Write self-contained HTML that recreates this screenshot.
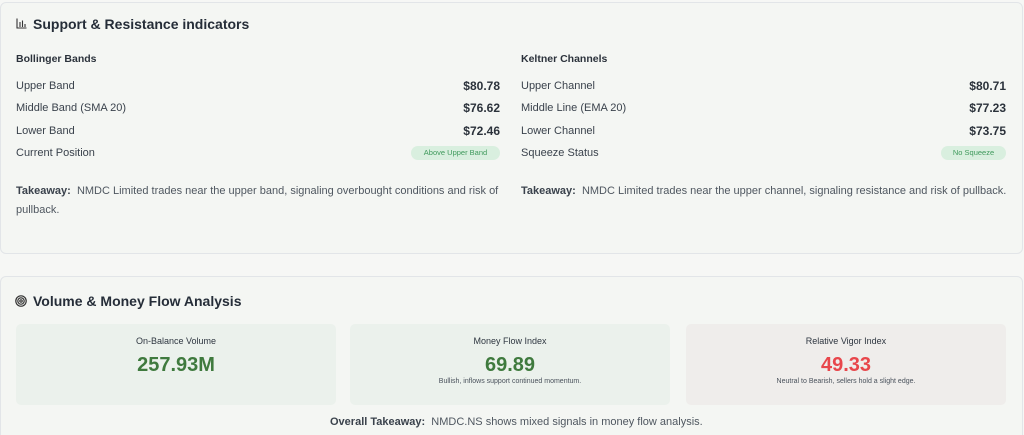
<!DOCTYPE html>
<html style="width:1024px;height:435px;overflow:hidden"><head><style>
*{box-sizing:border-box;margin:0;padding:0}
body{width:1024px;height:435px;overflow:hidden;background:#f6f7f5;font-family:"Liberation Sans",sans-serif;color:#333b44;position:relative}
.card{position:absolute;left:0;width:1023px;background:#f4f6f3;border:1px solid #e2e5e8;border-radius:6px}
.t{position:absolute;font-size:14px;font-weight:bold;color:#252d38;white-space:nowrap}
.a{position:absolute;white-space:nowrap}
.h{font-size:10.5px;font-weight:bold;color:#2b323b}
.l{font-size:11px;color:#3a424c}
.v{font-size:12px;font-weight:bold;color:#2b323b;text-align:right}
.b{position:absolute;height:14px;border-radius:7px;background:#d9efdf;color:#3f9a5c;font-size:7.5px;line-height:14px;padding:0 8px;text-align:center}
.tk{font-size:11px;color:#4f5760;line-height:19px}
.tk b{color:#3a424c}
.box{position:absolute;top:324px;height:81px;width:320px;border-radius:5px;background:#ebf1ec;text-align:center}
.box .n{font-size:9px;color:#2e3640;margin-top:12px}
.box .val{font-size:20px;font-weight:bold;color:#3f7a3e;margin-top:8px;line-height:22px}
.box .s{font-size:7px;color:#4a525c;margin-top:2px}
</style></head><body>
<div class="card" style="top:2px;height:252px"></div>
<div class="card" style="top:276px;height:165px"></div>
<svg style="position:absolute;left:16px;top:18px" width="11" height="11" viewBox="0 0 11 11" fill="none" stroke="#333" stroke-width="1.1"><path d="M1 0.5V10H10.5M4 9V4M6.5 9V2.5M9 9V6"/></svg>
<div class="t" style="left:33px;top:16px">Support &amp; Resistance indicators</div>
<div class="a h" style="left:16px;top:53px">Bollinger Bands</div>
<div class="a l" style="left:16px;top:80px">Upper Band</div><div class="a v" style="right:524px;top:79px">$80.78</div>
<div class="a l" style="left:16px;top:102px">Middle Band (SMA 20)</div><div class="a v" style="right:524px;top:101px">$76.62</div>
<div class="a l" style="left:16px;top:125px">Lower Band</div><div class="a v" style="right:524px;top:124px">$72.46</div>
<div class="a l" style="left:16px;top:147px">Current Position</div><div class="b" style="left:411px;top:146px;width:89px">Above Upper Band</div>
<div class="a tk" style="left:16px;top:182px;width:490px;white-space:normal"><b>Takeaway:</b>&nbsp; NMDC Limited trades near the upper band, signaling overbought conditions and risk of pullback.</div>
<div class="a h" style="left:521px;top:53px">Keltner Channels</div>
<div class="a l" style="left:521px;top:80px">Upper Channel</div><div class="a v" style="right:18px;top:79px">$80.71</div>
<div class="a l" style="left:521px;top:102px">Middle Line (EMA 20)</div><div class="a v" style="right:18px;top:101px">$77.23</div>
<div class="a l" style="left:521px;top:125px">Lower Channel</div><div class="a v" style="right:18px;top:124px">$73.75</div>
<div class="a l" style="left:521px;top:147px">Squeeze Status</div><div class="b" style="left:941px;top:146px;width:65px">No Squeeze</div>
<div class="a tk" style="left:521px;top:182px"><b>Takeaway:</b>&nbsp; NMDC Limited trades near the upper channel, signaling resistance and risk of pullback.</div>
<svg style="position:absolute;left:15px;top:295px" width="12" height="12" viewBox="0 0 12 12" fill="none" stroke="#333" stroke-width="1.2"><circle cx="6" cy="6" r="5.2"/><circle cx="6" cy="6" r="3.2"/><circle cx="6" cy="6" r="1.2"/></svg>
<div class="t" style="left:33px;top:293px">Volume &amp; Money Flow Analysis</div>
<div class="box" style="left:16px"><div class="n">On-Balance Volume</div><div class="val">257.93M</div></div>
<div class="box" style="left:350px;width:320px"><div class="n">Money Flow Index</div><div class="val">69.89</div><div class="s">Bullish, inflows support continued momentum.</div></div>
<div class="box" style="left:686px;background:#efedeb"><div class="n">Relative Vigor Index</div><div class="val" style="color:#e8464b">49.33</div><div class="s">Neutral to Bearish, sellers hold a slight edge.</div></div>
<div class="a tk" style="left:330px;top:413px"><b>Overall Takeaway:</b>&nbsp; NMDC.NS shows mixed signals in money flow analysis.</div>
</body></html>
